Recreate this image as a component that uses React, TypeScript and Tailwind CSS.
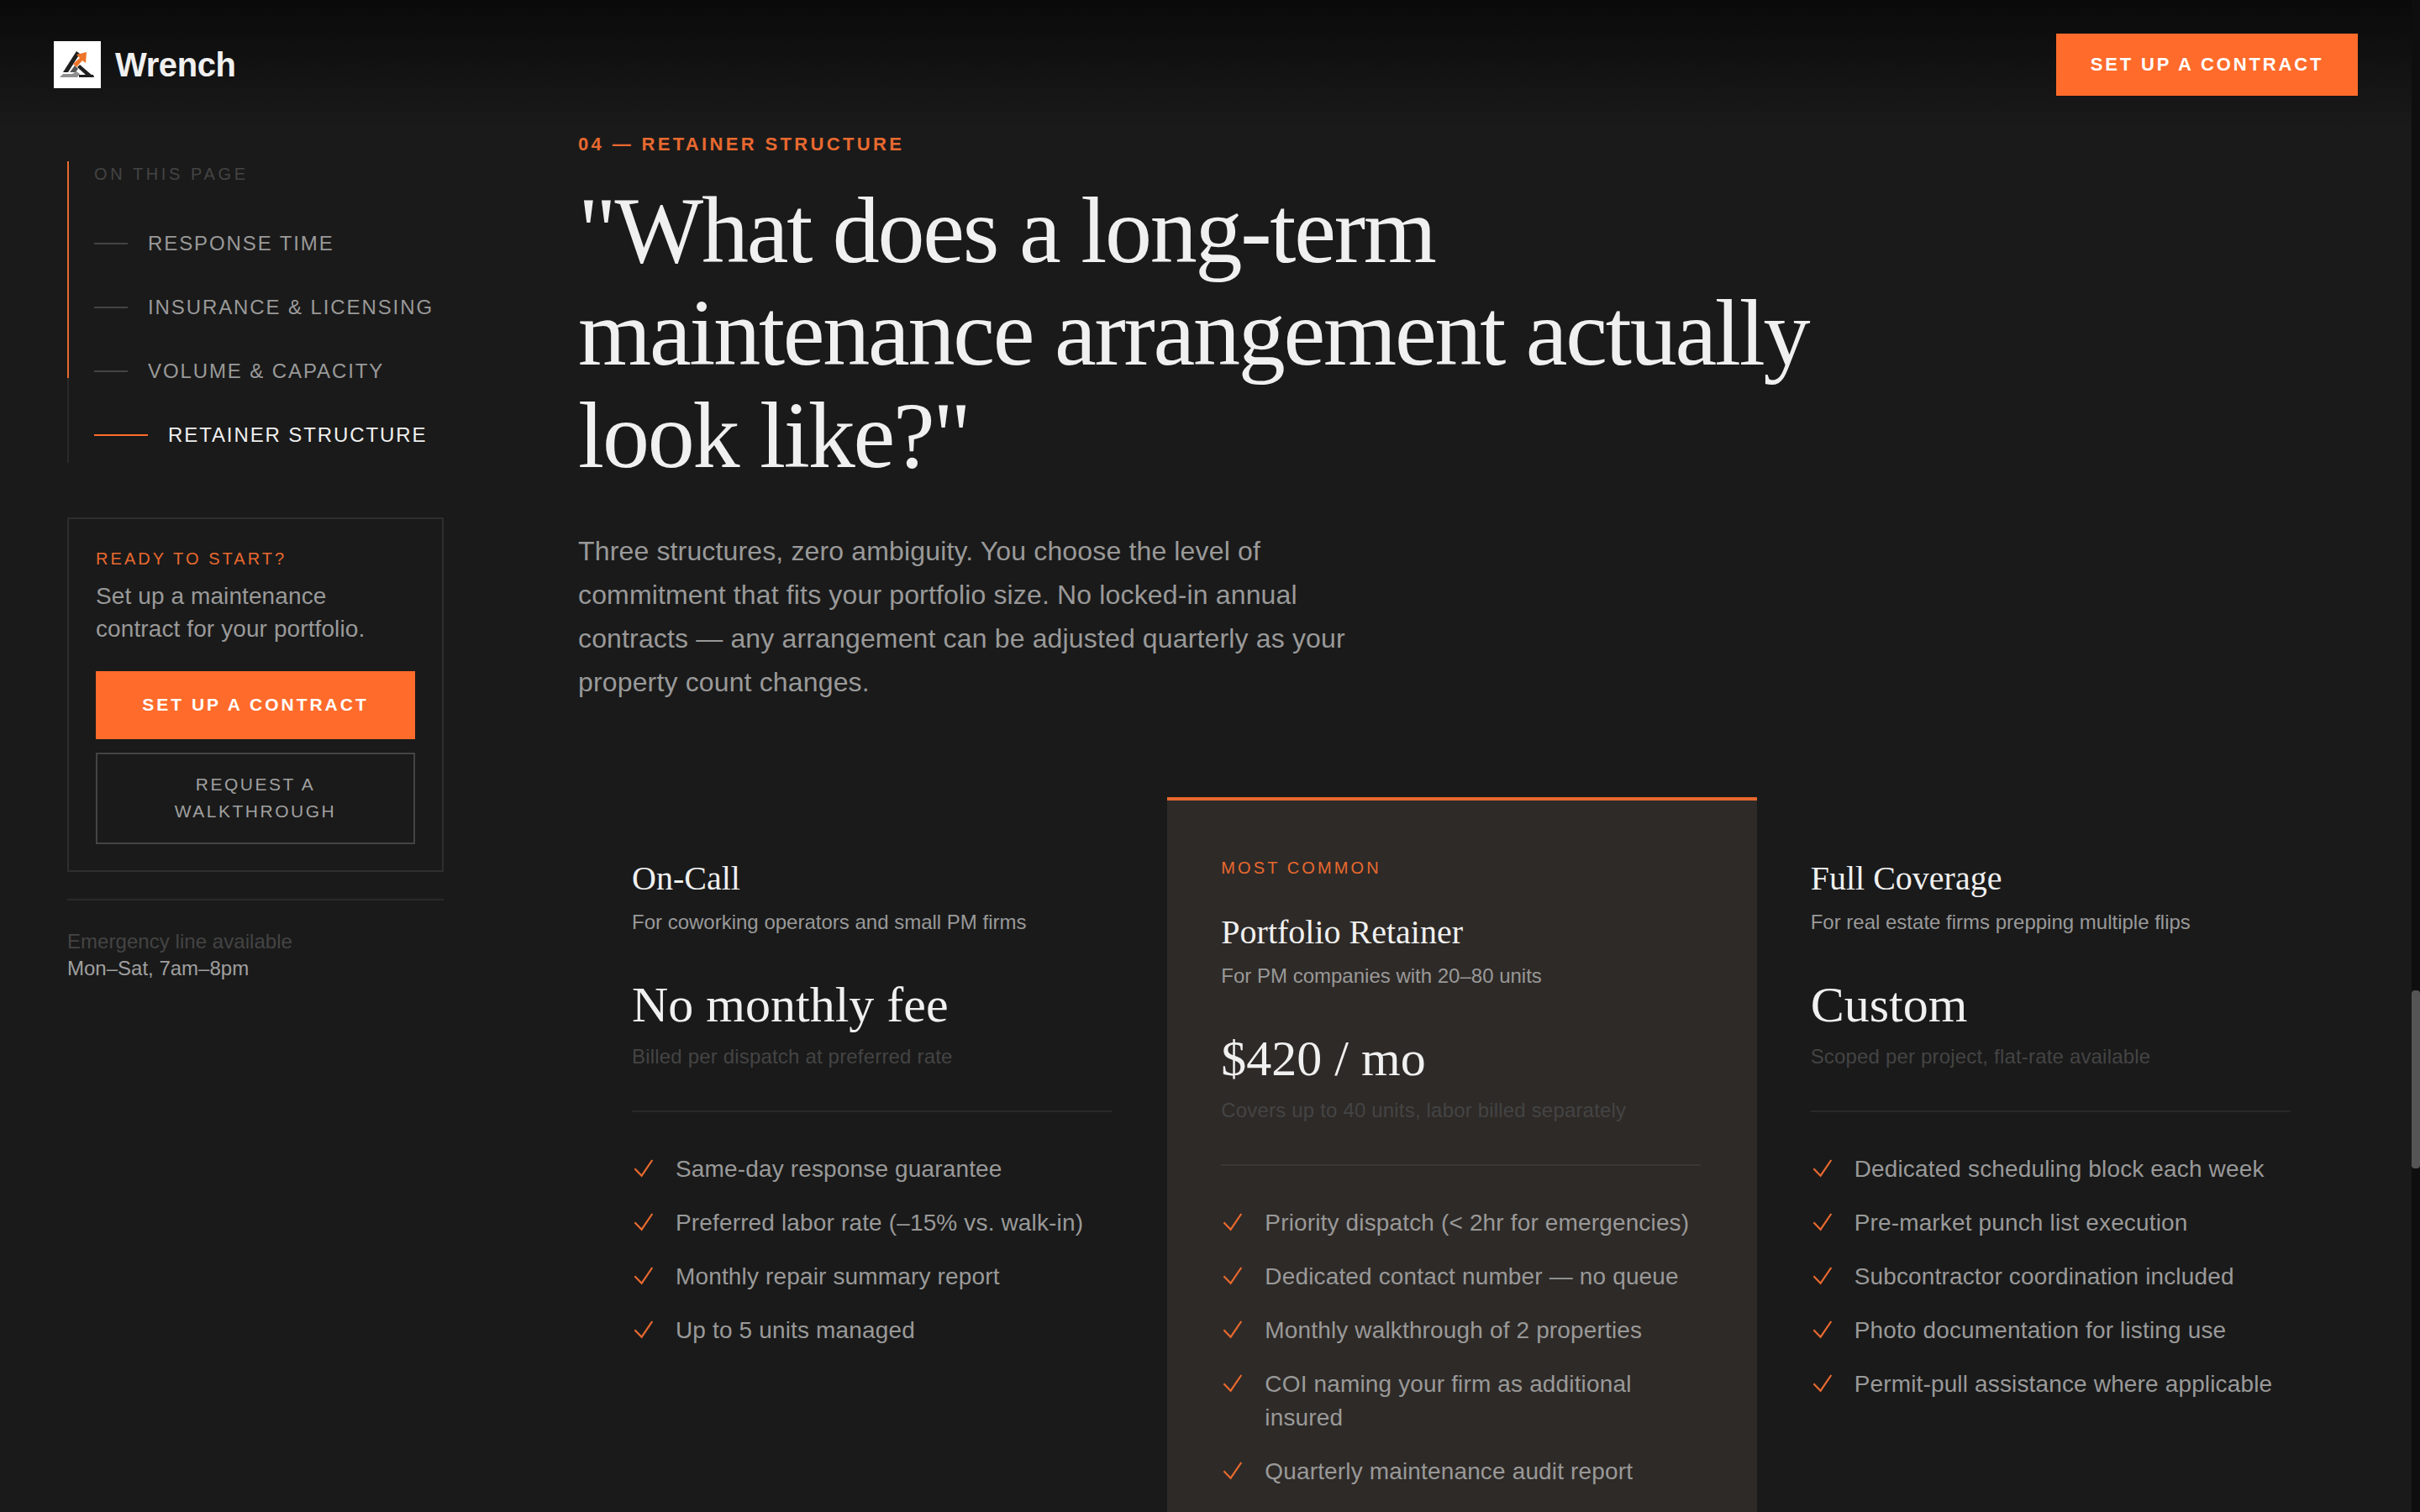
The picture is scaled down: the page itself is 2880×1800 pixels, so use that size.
import React from 'react';

const sans = "font-['Liberation_Sans','Arial',sans-serif]";
const serif = "font-['Liberation_Serif','Times_New_Roman',serif]";

const plans = [
  {
    name: 'On-Call',
    sub: 'For coworking operators and small PM firms',
    price: 'No monthly fee',
    note: 'Billed per dispatch at preferred rate',
    items: ['Same-day response guarantee', 'Preferred labor rate (–15% vs. walk-in)', 'Monthly repair summary report', 'Up to 5 units managed'],
  },
  {
    name: 'Portfolio Retainer',
    tag: 'MOST COMMON',
    sub: 'For PM companies with 20–80 units',
    price: '$420 / mo',
    note: 'Covers up to 40 units, labor billed separately',
    items: ['Priority dispatch (< 2hr for emergencies)', 'Dedicated contact number — no queue', 'Monthly walkthrough of 2 properties', 'COI naming your firm as additional insured', 'Quarterly maintenance audit report'],
  },
  {
    name: 'Full Coverage',
    sub: 'For real estate firms prepping multiple flips',
    price: 'Custom',
    note: 'Scoped per project, flat-rate available',
    items: ['Dedicated scheduling block each week', 'Pre-market punch list execution', 'Subcontractor coordination included', 'Photo documentation for listing use', 'Permit-pull assistance where applicable'],
  },
];

const navItems = ['RESPONSE TIME', 'INSURANCE & LICENSING', 'VOLUME & CAPACITY'];

const Logo = () => (
  <div className="w-[56px] h-[56px] bg-white shrink-0">
    <svg viewBox="0 0 56 56" className="w-[56px] h-[56px]">
      <path d="M11 37 L25 15 L27 12 L31 15 L17 37 Z" fill="#1f1f1f" />
      <path d="M31 28 L46 41 L39 41 L28 31 Z" fill="#1f1f1f" />
      <path d="M19 37 L25 29 L29 33 L26 37 Z" fill="#555555" />
      <path d="M27 31 L23 27 L31 20 L27 16 L39 13 L38 26 L34 23 Z" fill="#ee7429" />
      <path d="M7 43 L11 39 L22 39 L27 36 L31 39 L28 43 Z" fill="#8f8f8f" />
      <path d="M30 40 L47 40 L48 43 L30 43 Z" fill="#1f1f1f" />
    </svg>
  </div>
);

const Check = () => (
  <svg viewBox="0 0 28 28" className="w-[28px] h-[28px] shrink-0" fill="none" stroke="#e8692f" strokeWidth="2.2">
    <polyline points="3.4,13.3 11.6,21.7 24.3,3" />
  </svg>
);

export default function App() {
  return (
    <div className={`w-[2880px] h-[1800px] overflow-hidden flex bg-[#1a1a1a] ${sans}`}>
      <div className="w-[2870px] shrink-0">
        {/* top bar */}
        <header className="h-[154px] px-[64px] flex items-center justify-between bg-gradient-to-b from-[#0a0a0a] to-[#1a1a1a]">
          <div className="flex items-center gap-[17px]">
            <Logo />
            <span className="text-[40px] leading-[48px] font-bold text-[#f0f0f0] tracking-[-0.4px]">Wrench</span>
          </div>
          <button className="h-[74px] w-[359px] pb-[2px] bg-[#ff6b2b] text-white text-[22px] font-bold tracking-[2.85px]">
            SET UP A CONTRACT
          </button>
        </header>

        <div className="flex pl-[80px] gap-[160px]">
          {/* sidebar */}
          <aside className="w-[448px] shrink-0 pt-[38px]">
            <div className="relative border-l-2 border-[#2a2a2a] pl-[30px] pb-[15px]">
              <div className="absolute left-[-2px] top-0 w-[2px] h-[258px] bg-[#e8692f]" />
              <p className="text-[20px] leading-[30px] tracking-[3.6px] text-[#444444]">ON THIS PAGE</p>
              <ul className="mt-[50px] flex flex-col gap-[40px]">
                {navItems.map((n) => (
                  <li key={n} className="flex items-center gap-[24px] h-[36px]">
                    <span className="w-[40px] h-[2px] bg-[#444444]" />
                    <span className="text-[24px] tracking-[1.9px] text-[#999999]">{n}</span>
                  </li>
                ))}
                <li className="flex items-center gap-[24px] h-[36px]">
                  <span className="w-[64px] h-[2px] bg-[#ff6b2b]" />
                  <span className="text-[24px] tracking-[1.9px] text-[#f0f0f0]">RETAINER STRUCTURE</span>
                </li>
              </ul>
            </div>

            <div className="mt-[65px] border-2 border-[#2e2e2e] px-[32px] pt-[32px] pb-[31px]">
              <p className="text-[20px] leading-[30px] tracking-[3.05px] text-[#e8692f]">READY TO START?</p>
              <p className="mt-[10px] text-[28px] leading-[39px] text-[#999999] w-[340px] tracking-[0.1px]">Set up a maintenance contract for your portfolio.</p>
              <button className="mt-[31px] w-full h-[81px] pb-[2px] bg-[#ff6b2b] text-white text-[21px] font-bold tracking-[3px]">SET UP A CONTRACT</button>
              <button className="mt-[16px] w-full h-[109px] pb-[2px] border-2 border-[#444444] text-[#a0a0a0] text-[21px] leading-[32px] tracking-[2.5px] px-[32px]">REQUEST A WALKTHROUGH</button>
            </div>

            <div className="mt-[32px] border-t-2 border-[#2a2a2a] pt-[33px]">
              <p className="text-[24px] leading-[32px] text-[#444444] tracking-[0.05px]">Emergency line available</p>
              <p className="text-[24px] leading-[32px] text-[#a0a0a0]">Mon–Sat, 7am–8pm</p>
            </div>
          </aside>

          {/* section */}
          <main className="w-[2104px] shrink-0 pt-[3px]">
            <p className="text-[22px] leading-[30px] font-bold tracking-[3.35px] text-[#e8692f]">04 — RETAINER STRUCTURE</p>
            <h2 className={`${serif} mt-[26px] text-[112px] leading-[122px] tracking-[-2.24px] text-[#f0f0f0] font-normal w-[1480px]`}>
              "What does a long-term maintenance arrangement actually look like?"
            </h2>
            <p className="mt-[51px] text-[32px] leading-[52px] text-[#999999] w-[960px] tracking-[0.15px]">
              Three structures, zero ambiguity. You choose the level of commitment that fits your portfolio size. No locked-in annual contracts — any arrangement can be adjusted quarterly as your property count changes.
            </p>

            <div className="mt-[111px] grid grid-cols-3">
              {plans.map((p) => (
                <div key={p.name} className={`px-[64px] pt-[65px] pb-[200px] border-t-4 ${p.tag ? 'border-[#e8692f] bg-[#2e2a27]' : 'border-transparent'}`}>
                  {p.tag && <p className="text-[20px] leading-[30px] tracking-[3.1px] text-[#e8692f] mb-[34px]">{p.tag}</p>}
                  <h3 className={`${serif} text-[40px] leading-[56px] font-normal text-[#f0f0f0]`}>{p.name}</h3>
                  <p className="mt-[6px] text-[24px] leading-[36px] text-[#999999]">{p.sub}</p>
                  <p className={`${serif} mt-[44px] text-[60px] leading-[72px] text-[#f0f0f0]`}>{p.price}</p>
                  <p className="mt-[8px] text-[24px] leading-[36px] text-[#444444] tracking-[0.18px]">{p.note}</p>
                  <div className={`mt-[46px] w-[571px] border-t-2 pt-[48px] ${p.tag ? 'border-[#3a3633]' : 'border-[#2a2a2a]'}`}>
                    <ul className="flex flex-col gap-[24px]">
                      {p.items.map((it) => (
                        <li key={it} className="flex items-start gap-[24px]">
                          <span className="pt-[6px]"><Check /></span>
                          <span className="text-[28px] leading-[40px] text-[#999999] tracking-[0.15px]">{it}</span>
                        </li>
                      ))}
                    </ul>
                  </div>
                </div>
              ))}
            </div>
          </main>
        </div>
      </div>

      {/* scrollbar */}
      <div className="w-[10px] h-[1800px] bg-[#0e0e0e]">
        <div className="mt-[1179px] h-[212px] rounded-[4px] bg-[#555555]" />
      </div>
    </div>
  );
}
